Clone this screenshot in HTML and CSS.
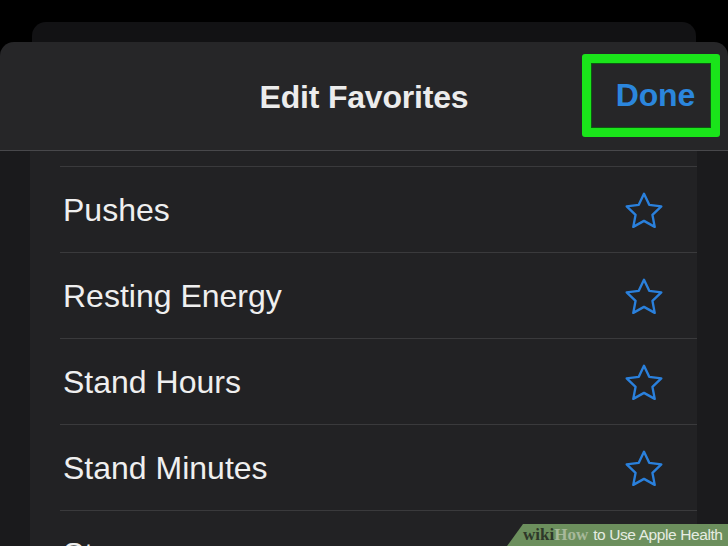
FILE: index.html
```html
<!DOCTYPE html>
<html lang="en">
<head>
<meta charset="utf-8">
<title>Edit Favorites</title>
<link rel="stylesheet" href="styles.css">
</head>
<body>
<div class="screen">
  <div class="backcard"></div>
  <div class="sheet">
    <header class="header">
      <div class="title">Edit Favorites</div>
      <div class="done">Done</div>
      <div class="highlight"></div>
    </header>
    <div class="content">
      <div class="strip strip-left"></div>
      <div class="list">
        <div class="row"><span class="label">Pushes</span>
          <svg class="star" viewBox="0 0 24 24"><path d="M12 2.6l2.85 6.05 6.6.85-4.85 4.6 1.25 6.55L12 17.4l-5.85 3.25 1.25-6.55L2.55 9.5l6.6-.85z"/></svg>
        </div>
        <div class="row"><span class="label">Resting Energy</span>
          <svg class="star" viewBox="0 0 24 24"><path d="M12 2.6l2.85 6.05 6.6.85-4.85 4.6 1.25 6.55L12 17.4l-5.85 3.25 1.25-6.55L2.55 9.5l6.6-.85z"/></svg>
        </div>
        <div class="row"><span class="label">Stand Hours</span>
          <svg class="star" viewBox="0 0 24 24"><path d="M12 2.6l2.85 6.05 6.6.85-4.85 4.6 1.25 6.55L12 17.4l-5.85 3.25 1.25-6.55L2.55 9.5l6.6-.85z"/></svg>
        </div>
        <div class="row"><span class="label">Stand Minutes</span>
          <svg class="star" viewBox="0 0 24 24"><path d="M12 2.6l2.85 6.05 6.6.85-4.85 4.6 1.25 6.55L12 17.4l-5.85 3.25 1.25-6.55L2.55 9.5l6.6-.85z"/></svg>
        </div>
        <div class="row"><span class="label">Steps</span>
          <svg class="star" viewBox="0 0 24 24"><path d="M12 2.6l2.85 6.05 6.6.85-4.85 4.6 1.25 6.55L12 17.4l-5.85 3.25 1.25-6.55L2.55 9.5l6.6-.85z"/></svg>
        </div>
      </div>
      <div class="strip strip-right"></div>
    </div>
  </div>
  <div class="watermark"><span class="wiki">wiki</span><span class="how">How</span><span class="wm-text">to Use Apple Health</span></div>
</div>
</body>
</html>
```

FILE: styles.css
```css
* { box-sizing: border-box; }

html, body {
  margin: 0;
  padding: 0;
  background: #000;
}

.screen {
  position: relative;
  width: 728px;
  height: 546px;
  overflow: hidden;
  background: #000;
  font-family: "Liberation Sans", Arial, sans-serif;
  padding-top: 22px;
}

.backcard {
  margin: 0 32px;
  height: 24px;
  margin-bottom: -4px;
  border-radius: 14px 14px 0 0;
  background: #121214;
}

.sheet {
  background: #262628;
  border-radius: 14px 14px 0 0;
}

.header {
  position: relative;
  height: 109px;
  border-bottom: 1px solid #48484b;
  display: flex;
  align-items: center;
  justify-content: center;
}

.title {
  color: #ececec;
  font-size: 32px;
  font-weight: 700;
  letter-spacing: -0.2px;
  margin-top: 2px;
}

.done {
  position: absolute;
  right: 33px;
  top: 35px;
  color: #2b86dd;
  font-size: 32px;
  font-weight: 700;
  letter-spacing: -0.2px;
}

.highlight {
  position: absolute;
  left: 582px;
  top: 12px;
  width: 138px;
  height: 83px;
  border: 9px solid #1ae41a;
  border-radius: 3px;
  box-shadow: inset 0 0 0 1px #0d5a12;
}

.content {
  display: flex;
  height: 410px;
}

.strip {
  flex: none;
}

.strip-left {
  width: 30px;
  background: #1a1a1c;
}

.strip-right {
  width: 31px;
  background: #1b1b1d;
}

.list {
  flex: 1;
  background: #222224;
  padding-top: 15px;
  overflow: hidden;
}

.row {
  margin-left: 30px;
  height: 86px;
  border-top: 1px solid #3a3a3c;
  display: flex;
  align-items: center;
  justify-content: space-between;
  padding: 0 31px 0 3px;
}

.label {
  color: #efefef;
  font-size: 32px;
  font-weight: 400;
  margin-top: 1px;
}

.star {
  width: 44px;
  height: 44px;
  margin-top: 2px;
  fill: none;
  stroke: #2a80dc;
  stroke-width: 1.3;
  stroke-linejoin: round;
}

.watermark {
  position: absolute;
  right: 0;
  bottom: 0;
  width: 221px;
  height: 22px;
  background: #6c8f5d;
  clip-path: polygon(16px 0, 100% 0, 100% 100%, 0 100%);
  padding-left: 16px;
  display: flex;
  align-items: center;
  white-space: nowrap;
}

.wiki {
  font-family: "Liberation Serif", "Times New Roman", serif;
  font-weight: 700;
  font-size: 17px;
  color: #2e3829;
}

.how {
  font-family: "Liberation Serif", "Times New Roman", serif;
  font-weight: 700;
  font-size: 17px;
  color: #a7b99a;
}

.wm-text {
  margin-left: 5px;
  font-size: 15.5px;
  letter-spacing: -0.4px;
  color: #e6ece2;
}
```
